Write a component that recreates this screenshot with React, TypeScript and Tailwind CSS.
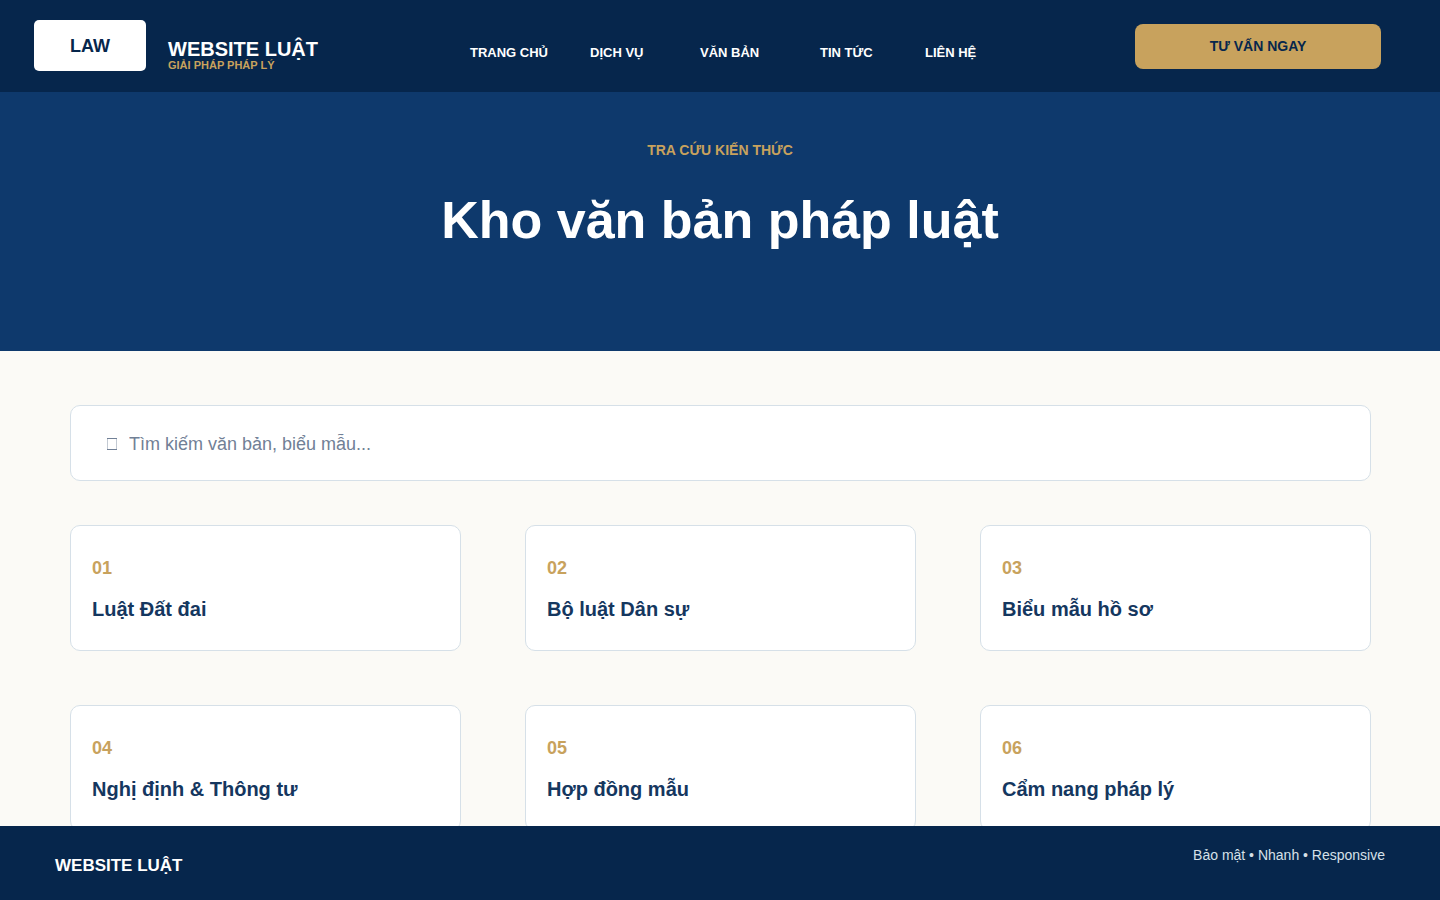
import React from 'react'

const navLinks = [
  { label: 'TRANG CHỦ', width: 'w-[120px]' },
  { label: 'DỊCH VỤ', width: 'w-[110px]' },
  { label: 'VĂN BẢN', width: 'w-[120px]' },
  { label: 'TIN TỨC', width: 'w-[105px]' },
  { label: 'LIÊN HỆ', width: 'w-[60px]' },
]

const documents = [
  { id: '01', title: 'Luật Đất đai' },
  { id: '02', title: 'Bộ luật Dân sự' },
  { id: '03', title: 'Biểu mẫu hồ sơ' },
  { id: '04', title: 'Nghị định & Thông tư' },
  { id: '05', title: 'Hợp đồng mẫu' },
  { id: '06', title: 'Cẩm nang pháp lý' },
]

const Header = () => {
  return (
    <header className="flex h-[92px] items-start justify-between bg-[#06264c] pl-[34px] pr-[59px]">
      <div className="flex w-[436px] items-start gap-[22px]">
        <a href="#" className="mt-5 flex h-[51px] w-28 items-center justify-center rounded-[5px] bg-white text-lg font-bold text-[#06264c]">
          LAW
        </a>
        <div className="mt-[39px] font-bold">
          <p className="text-xl leading-5 text-white">WEBSITE LUẬT</p>
          <p className="text-[11px] leading-3 text-[#c8a25d]">GIẢI PHÁP PHÁP LÝ</p>
        </div>
      </div>
      <nav className="mt-[43px] flex flex-1 text-[13px] font-bold leading-5 text-white">
        {navLinks.map((link) => (
          <a key={link.label} href="#" className={`${link.width} whitespace-nowrap`}>
            {link.label}
          </a>
        ))}
      </nav>
      <button type="button" className="mt-6 h-[45px] w-[246px] rounded-[8px] bg-[#c8a25d] pb-0.5 text-sm font-bold text-[#06264c]">
        TƯ VẤN NGAY
      </button>
    </header>
  )
}

const Hero = () => {
  return (
    <section className="bg-[#0e396c] pb-[95px] pt-12 text-center font-bold">
      <p className="text-sm leading-5 text-[#c8a25d]">TRA CỨU KIẾN THỨC</p>
      <h1 className="mt-6 text-[52px] leading-[72px] text-white">Kho văn bản pháp luật</h1>
    </section>
  )
}

const SearchBox = () => {
  return (
    <label className="flex h-[76px] items-center gap-3 rounded-[10px] border border-[#d6e0e8] bg-white px-9 pt-0.5">
      <svg width="10" height="12" viewBox="0 0 10 12" fill="none" aria-hidden="true">
        <path d="M0.5 0V12M9.5 0V12" stroke="#c3cad3" />
        <path d="M0 0.5H10M0 11.5H10" stroke="#718096" />
      </svg>
      <input
        type="text"
        aria-label="Tìm kiếm"
        placeholder="Tìm kiếm văn bản, biểu mẫu..."
        className="flex-1 text-lg text-[#718096] outline-none placeholder:text-[#718096]"
      />
    </label>
  )
}

const App = () => {
  return (
    <div className="bg-[#fbfaf6] font-['Liberation_Sans',Arial,sans-serif]">
      <Header />
      <Hero />
      <main className="pl-[70px] pr-[69px] pt-[54px]">
        <SearchBox />
        <div className="mt-11 grid grid-cols-3 gap-x-16 gap-y-[54px]">
          {documents.map((doc) => (
            <article key={doc.id} className="h-[126px] rounded-[10px] border border-[#d6e0e8] bg-white px-[21px] pt-[30px] font-bold">
              <p className="text-lg leading-6 text-[#c8a25d]">{doc.id}</p>
              <h2 className="mt-[15px] text-xl leading-7 text-[#15375f]">{doc.title}</h2>
            </article>
          ))}
        </div>
      </main>
      {/* the footer covers the bottom edge of the last row */}
      <footer className="relative -mt-[5px] flex h-[74px] justify-between bg-[#06264c] px-[55px]">
        <p className="mt-7 text-[17px] font-bold leading-6 text-white">WEBSITE LUẬT</p>
        <p className="mt-[19px] text-sm leading-5 text-[#d6e0e8]">Bảo mật • Nhanh • Responsive</p>
      </footer>
    </div>
  )
}

export default App
